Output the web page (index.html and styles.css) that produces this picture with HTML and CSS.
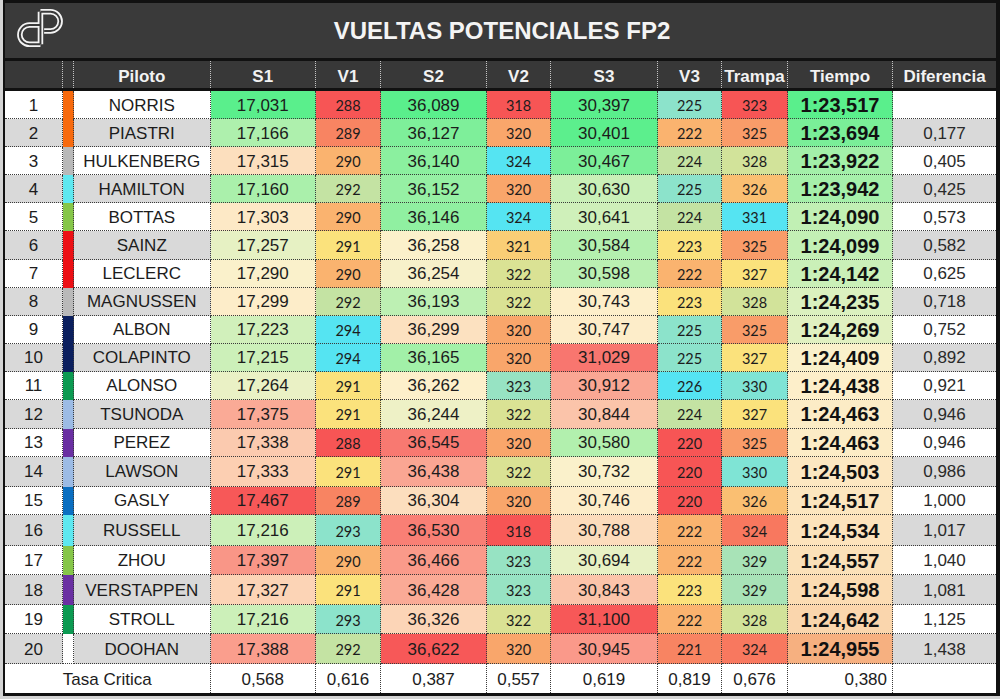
FILE: index.html
```html
<!DOCTYPE html>
<html lang="es">
<head>
<meta charset="utf-8">
<title>Vueltas potenciales FP2</title>
<link rel="stylesheet" href="styles.css">
</head>
<body>
<div class="sheet">
  <div class="title">
    <div class="logo">
      <svg width="46" height="38" viewBox="0.5 -2 50 41.5">
        <g fill="none" stroke-linecap="butt" stroke-linejoin="round">
          <path class="lg-out" d="M26 15.5 H14 A10.5 10.5 0 0 0 14 36.5 H26 M26 1 V36.5 M26 1 H37 A10.5 10.5 0 0 1 37 22 H30"/>
          <path class="lg-in" d="M26 15.5 H14 A10.5 10.5 0 0 0 14 36.5 H26 M26 1 V36.5 M26 1 H37 A10.5 10.5 0 0 1 37 22 H30"/>
        </g>
      </svg>
    </div>
    <h1 class="heading">VUELTAS POTENCIALES FP2</h1>
    <div class="spacer"></div>
  </div>

  <div class="row head">
    <div></div><div></div><div>Piloto</div><div>S1</div><div>V1</div><div>S2</div><div>V2</div><div>S3</div><div>V3</div><div>Trampa</div><div>Tiempo</div><div>Diferencia</div>
  </div>

  <div class="body">
    <div class="row"><div class="pos">1</div><div class="strip mcl"></div><div class="name">NORRIS</div><div class="num s1" data-scale="s">17,031</div><div class="spd v1" data-scale="v">288</div><div class="num s2" data-scale="s">36,089</div><div class="spd v2" data-scale="v">318</div><div class="num s3" data-scale="s">30,397</div><div class="spd v3" data-scale="v">225</div><div class="spd tr" data-scale="v">323</div><div class="time ti" data-scale="t">1:23,517</div><div class="dif"></div></div>
    <div class="row"><div class="pos">2</div><div class="strip mcl"></div><div class="name">PIASTRI</div><div class="num s1" data-scale="s">17,166</div><div class="spd v1" data-scale="v">289</div><div class="num s2" data-scale="s">36,127</div><div class="spd v2" data-scale="v">320</div><div class="num s3" data-scale="s">30,401</div><div class="spd v3" data-scale="v">222</div><div class="spd tr" data-scale="v">325</div><div class="time ti" data-scale="t">1:23,694</div><div class="dif">0,177</div></div>
    <div class="row"><div class="pos">3</div><div class="strip haas"></div><div class="name">HULKENBERG</div><div class="num s1" data-scale="s">17,315</div><div class="spd v1" data-scale="v">290</div><div class="num s2" data-scale="s">36,140</div><div class="spd v2" data-scale="v">324</div><div class="num s3" data-scale="s">30,467</div><div class="spd v3" data-scale="v">224</div><div class="spd tr" data-scale="v">328</div><div class="time ti" data-scale="t">1:23,922</div><div class="dif">0,405</div></div>
    <div class="row"><div class="pos">4</div><div class="strip merc"></div><div class="name">HAMILTON</div><div class="num s1" data-scale="s">17,160</div><div class="spd v1" data-scale="v">292</div><div class="num s2" data-scale="s">36,152</div><div class="spd v2" data-scale="v">320</div><div class="num s3" data-scale="s">30,630</div><div class="spd v3" data-scale="v">225</div><div class="spd tr" data-scale="v">326</div><div class="time ti" data-scale="t">1:23,942</div><div class="dif">0,425</div></div>
    <div class="row"><div class="pos">5</div><div class="strip sau"></div><div class="name">BOTTAS</div><div class="num s1" data-scale="s">17,303</div><div class="spd v1" data-scale="v">290</div><div class="num s2" data-scale="s">36,146</div><div class="spd v2" data-scale="v">324</div><div class="num s3" data-scale="s">30,641</div><div class="spd v3" data-scale="v">224</div><div class="spd tr" data-scale="v">331</div><div class="time ti" data-scale="t">1:24,090</div><div class="dif">0,573</div></div>
    <div class="row"><div class="pos">6</div><div class="strip fer"></div><div class="name">SAINZ</div><div class="num s1" data-scale="s">17,257</div><div class="spd v1" data-scale="v">291</div><div class="num s2" data-scale="s">36,258</div><div class="spd v2" data-scale="v">321</div><div class="num s3" data-scale="s">30,584</div><div class="spd v3" data-scale="v">223</div><div class="spd tr" data-scale="v">325</div><div class="time ti" data-scale="t">1:24,099</div><div class="dif">0,582</div></div>
    <div class="row"><div class="pos">7</div><div class="strip fer"></div><div class="name">LECLERC</div><div class="num s1" data-scale="s">17,290</div><div class="spd v1" data-scale="v">290</div><div class="num s2" data-scale="s">36,254</div><div class="spd v2" data-scale="v">322</div><div class="num s3" data-scale="s">30,598</div><div class="spd v3" data-scale="v">222</div><div class="spd tr" data-scale="v">327</div><div class="time ti" data-scale="t">1:24,142</div><div class="dif">0,625</div></div>
    <div class="row"><div class="pos">8</div><div class="strip haas"></div><div class="name">MAGNUSSEN</div><div class="num s1" data-scale="s">17,299</div><div class="spd v1" data-scale="v">292</div><div class="num s2" data-scale="s">36,193</div><div class="spd v2" data-scale="v">322</div><div class="num s3" data-scale="s">30,743</div><div class="spd v3" data-scale="v">223</div><div class="spd tr" data-scale="v">328</div><div class="time ti" data-scale="t">1:24,235</div><div class="dif">0,718</div></div>
    <div class="row"><div class="pos">9</div><div class="strip wil"></div><div class="name">ALBON</div><div class="num s1" data-scale="s">17,223</div><div class="spd v1" data-scale="v">294</div><div class="num s2" data-scale="s">36,299</div><div class="spd v2" data-scale="v">320</div><div class="num s3" data-scale="s">30,747</div><div class="spd v3" data-scale="v">225</div><div class="spd tr" data-scale="v">325</div><div class="time ti" data-scale="t">1:24,269</div><div class="dif">0,752</div></div>
    <div class="row"><div class="pos">10</div><div class="strip wil"></div><div class="name">COLAPINTO</div><div class="num s1" data-scale="s">17,215</div><div class="spd v1" data-scale="v">294</div><div class="num s2" data-scale="s">36,165</div><div class="spd v2" data-scale="v">320</div><div class="num s3" data-scale="s">31,029</div><div class="spd v3" data-scale="v">225</div><div class="spd tr" data-scale="v">327</div><div class="time ti" data-scale="t">1:24,409</div><div class="dif">0,892</div></div>
    <div class="row"><div class="pos">11</div><div class="strip ast"></div><div class="name">ALONSO</div><div class="num s1" data-scale="s">17,264</div><div class="spd v1" data-scale="v">291</div><div class="num s2" data-scale="s">36,262</div><div class="spd v2" data-scale="v">323</div><div class="num s3" data-scale="s">30,912</div><div class="spd v3" data-scale="v">226</div><div class="spd tr" data-scale="v">330</div><div class="time ti" data-scale="t">1:24,438</div><div class="dif">0,921</div></div>
    <div class="row"><div class="pos">12</div><div class="strip rb"></div><div class="name">TSUNODA</div><div class="num s1" data-scale="s">17,375</div><div class="spd v1" data-scale="v">291</div><div class="num s2" data-scale="s">36,244</div><div class="spd v2" data-scale="v">322</div><div class="num s3" data-scale="s">30,844</div><div class="spd v3" data-scale="v">224</div><div class="spd tr" data-scale="v">327</div><div class="time ti" data-scale="t">1:24,463</div><div class="dif">0,946</div></div>
    <div class="row"><div class="pos">13</div><div class="strip rbr"></div><div class="name">PEREZ</div><div class="num s1" data-scale="s">17,338</div><div class="spd v1" data-scale="v">288</div><div class="num s2" data-scale="s">36,545</div><div class="spd v2" data-scale="v">320</div><div class="num s3" data-scale="s">30,580</div><div class="spd v3" data-scale="v">220</div><div class="spd tr" data-scale="v">325</div><div class="time ti" data-scale="t">1:24,463</div><div class="dif">0,946</div></div>
    <div class="row"><div class="pos">14</div><div class="strip rb"></div><div class="name">LAWSON</div><div class="num s1" data-scale="s">17,333</div><div class="spd v1" data-scale="v">291</div><div class="num s2" data-scale="s">36,438</div><div class="spd v2" data-scale="v">322</div><div class="num s3" data-scale="s">30,732</div><div class="spd v3" data-scale="v">220</div><div class="spd tr" data-scale="v">330</div><div class="time ti" data-scale="t">1:24,503</div><div class="dif">0,986</div></div>
    <div class="row"><div class="pos">15</div><div class="strip alp"></div><div class="name">GASLY</div><div class="num s1" data-scale="s">17,467</div><div class="spd v1" data-scale="v">289</div><div class="num s2" data-scale="s">36,304</div><div class="spd v2" data-scale="v">320</div><div class="num s3" data-scale="s">30,746</div><div class="spd v3" data-scale="v">220</div><div class="spd tr" data-scale="v">326</div><div class="time ti" data-scale="t">1:24,517</div><div class="dif">1,000</div></div>
    <div class="row"><div class="pos">16</div><div class="strip merc"></div><div class="name">RUSSELL</div><div class="num s1" data-scale="s">17,216</div><div class="spd v1" data-scale="v">293</div><div class="num s2" data-scale="s">36,530</div><div class="spd v2" data-scale="v">318</div><div class="num s3" data-scale="s">30,788</div><div class="spd v3" data-scale="v">222</div><div class="spd tr" data-scale="v">324</div><div class="time ti" data-scale="t">1:24,534</div><div class="dif">1,017</div></div>
    <div class="row"><div class="pos">17</div><div class="strip sau"></div><div class="name">ZHOU</div><div class="num s1" data-scale="s">17,397</div><div class="spd v1" data-scale="v">290</div><div class="num s2" data-scale="s">36,466</div><div class="spd v2" data-scale="v">323</div><div class="num s3" data-scale="s">30,694</div><div class="spd v3" data-scale="v">222</div><div class="spd tr" data-scale="v">329</div><div class="time ti" data-scale="t">1:24,557</div><div class="dif">1,040</div></div>
    <div class="row"><div class="pos">18</div><div class="strip rbr"></div><div class="name">VERSTAPPEN</div><div class="num s1" data-scale="s">17,327</div><div class="spd v1" data-scale="v">291</div><div class="num s2" data-scale="s">36,428</div><div class="spd v2" data-scale="v">323</div><div class="num s3" data-scale="s">30,843</div><div class="spd v3" data-scale="v">223</div><div class="spd tr" data-scale="v">329</div><div class="time ti" data-scale="t">1:24,598</div><div class="dif">1,081</div></div>
    <div class="row"><div class="pos">19</div><div class="strip ast"></div><div class="name">STROLL</div><div class="num s1" data-scale="s">17,216</div><div class="spd v1" data-scale="v">293</div><div class="num s2" data-scale="s">36,326</div><div class="spd v2" data-scale="v">322</div><div class="num s3" data-scale="s">31,100</div><div class="spd v3" data-scale="v">222</div><div class="spd tr" data-scale="v">328</div><div class="time ti" data-scale="t">1:24,642</div><div class="dif">1,125</div></div>
    <div class="row"><div class="pos">20</div><div class="strip doo"></div><div class="name">DOOHAN</div><div class="num s1" data-scale="s">17,388</div><div class="spd v1" data-scale="v">292</div><div class="num s2" data-scale="s">36,622</div><div class="spd v2" data-scale="v">320</div><div class="num s3" data-scale="s">30,945</div><div class="spd v3" data-scale="v">221</div><div class="spd tr" data-scale="v">324</div><div class="time ti" data-scale="t">1:24,955</div><div class="dif">1,438</div></div>
  </div>

  <div class="row foot">
    <div class="label">Tasa Critica</div><div>0,568</div><div>0,616</div><div>0,387</div><div>0,557</div><div>0,619</div><div>0,819</div><div>0,676</div><div class="right">0,380</div><div></div>
  </div>
</div>
<script src="script.js"></script>
</body>
</html>
```

FILE: styles.css
```css
* { box-sizing: border-box; }
html, body { margin: 0; padding: 0; }
body {
  background: #d4d4d4;
  font-family: "Liberation Sans", Arial, sans-serif;
  width: 1000px;
  height: 699px;
  overflow: hidden;
  color: #1c1c1c;
}
.sheet {
  margin-left: 3px;
  width: 997px;
  background: #fff;
  border-left: 2px solid #111;
  border-right: 4px solid #111;
  border-top: 3px solid #111;
  border-bottom: 3px solid #111;
}
.title {
  height: 58px;
  background: #3a3a3a;
  border-bottom: 3px solid #111;
  display: grid;
  grid-template-columns: 1fr auto 1fr;
  align-items: center;
}
.logo { align-self: start; padding: 6px 0 0 12px; }
.logo svg { display: block; }
.lg-out { stroke: #f4f4f4; stroke-width: 6; }
.lg-in { stroke: #3a3a3a; stroke-width: 2.1; }
.heading {
  margin: 0;
  font-size: 24px;
  font-weight: bold;
  color: #f4f4f4;
  padding-left: 3px;
}
.row {
  display: grid;
  grid-template-columns: 58px 11px 136.5px 105.5px 65px 106px 64px 107px 64px 66px 105px 103px;
}
.row > div {
  display: flex;
  align-items: center;
  justify-content: center;
  white-space: nowrap;
}
.head {
  height: 30px;
  background: #383838;
  border-bottom: 3px solid #111;
  color: #f2f2f2;
  font-weight: bold;
  font-size: 17px;
}
.head > div { border-right: 1px dotted #c4c4c4; padding-top: 4px; }
.head > div:last-child { border-right: none; }

.body .row { height: 28.1px; font-size: 17px; }
.body .row:nth-child(even) { background: #d9d9d9; }
.body .row:nth-child(12) { height: 28.6px; }
.body .row:nth-child(13) { height: 28.4px; }
.body .row:nth-child(14) { height: 29.6px; }
.body .row:nth-child(15) { height: 28.7px; }
.body .row:nth-child(16) { height: 30.7px; }
.body .row:nth-child(17) { height: 29.3px; }
.body .row:nth-child(18) { height: 29.7px; }
.body .row:nth-child(19) { height: 29.3px; }
.body .row:nth-child(20) { height: 30px; }

.body .row > div {
  border-right: 1px dotted #3a3a3a;
  border-bottom: 1px dotted #3a3a3a;
  padding-top: 2px;
}
.body .row > div:last-child { border-right: none; }
.body .row > .strip { border-bottom: none; }
.body .row:last-child > .strip { border-bottom: 1px dotted #3a3a3a; }

.spd { font-family: Lato, "Open Sans", sans-serif; font-size: 14.5px; }
.time { font-weight: bold; font-size: 20px; color: #111; }
.dif { color: #2a2a2a; }

.mcl { background: #f76a0e; }
.haas { background: #b9b9b9; }
.merc { background: #5ee8f0; }
.sau { background: #86c64a; }
.fer { background: #ec1015; }
.wil { background: #0b1f5e; }
.ast { background: #0c9a52; }
.rb { background: #9cbbe4; }
.rbr { background: #6a30a2; }
.alp { background: #0b6fc1; }
.doo { background: #ffffff; }

.foot {
  height: 29px;
  font-size: 17px;
  background: #fff;
  grid-template-columns: 205.5px 105.5px 65px 106px 64px 107px 64px 66px 105px 103px;
}
.foot > div { border-right: 1px dotted #3a3a3a; padding-top: 2px; }
.foot > div:last-child { border-right: none; }
.foot > .right { justify-content: flex-end; padding-right: 5px; }
```

FILE: script.js
```js
(function () {
  function parse(t) {
    t = t.trim();
    var m = 0;
    if (t.indexOf(':') >= 0) {
      var p = t.split(':');
      m = parseFloat(p[0]) * 60;
      t = p[1];
    }
    return m + parseFloat(t.replace(',', '.'));
  }
  function median(a) {
    var s = a.slice().sort(function (x, y) { return x - y; });
    var r = (s.length - 1) * 0.5, lo = Math.floor(r), hi = Math.ceil(r);
    return s[lo] + (s[hi] - s[lo]) * (r - lo);
  }
  function mix(a, b, t) {
    return 'rgb(' + [0, 1, 2].map(function (i) { return Math.round(a[i] + (b[i] - a[i]) * t); }).join(',') + ')';
  }
  var G = [90, 239, 140], M = [253, 241, 204], R = [247, 88, 88], O = [246, 176, 128];
  var RR = [247, 85, 85], Y = [251, 226, 124], C = [85, 228, 242];
  var scales = { s: [G, M, R], t: [G, M, O], v: [RR, Y, C] };
  ['s1', 'v1', 's2', 'v2', 's3', 'v3', 'tr', 'ti'].forEach(function (col) {
    var cells = Array.prototype.slice.call(document.querySelectorAll('.body .' + col));
    if (!cells.length) return;
    var vals = cells.map(function (c) { return parse(c.textContent); });
    var mn = Math.min.apply(null, vals), mx = Math.max.apply(null, vals), md = median(vals);
    var sc = scales[cells[0].getAttribute('data-scale')];
    cells.forEach(function (c, i) {
      var v = vals[i], col;
      if (v <= md) col = mix(sc[0], sc[1], md > mn ? (v - mn) / (md - mn) : 1);
      else col = mix(sc[1], sc[2], mx > md ? (v - md) / (mx - md) : 1);
      c.style.backgroundColor = col;
    });
  });
})();
```
